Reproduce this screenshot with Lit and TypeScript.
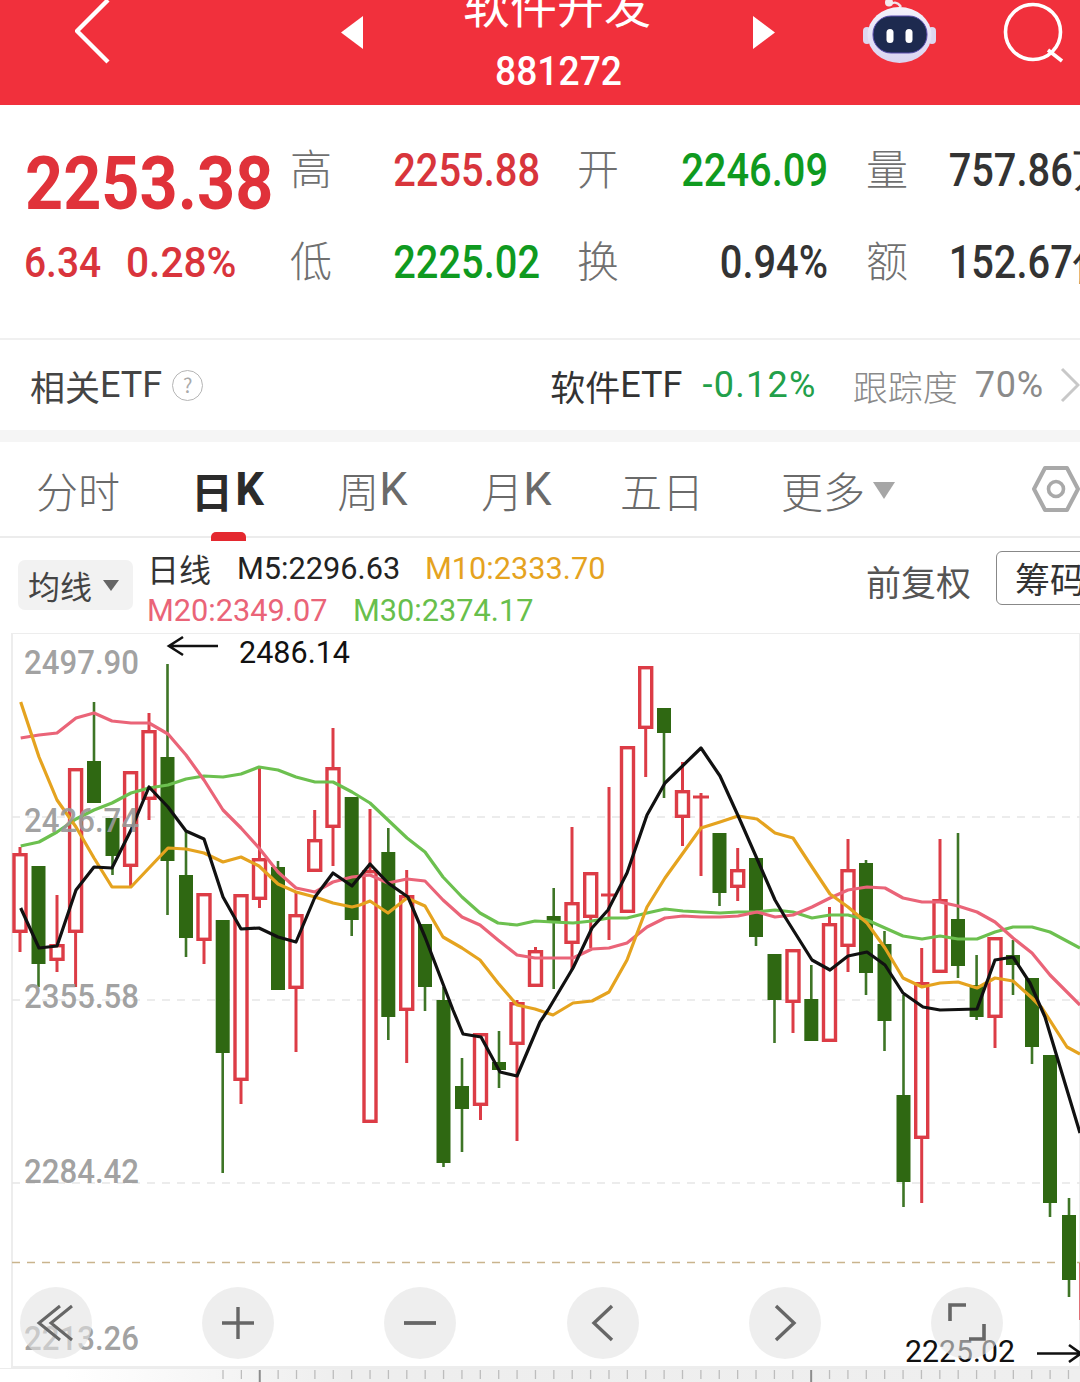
import { LitElement, html, css, svg } from "lit";
import { customElement } from "lit/decorators.js";

type Candle = [number, number, number, number, number, "r" | "g" | "d"];
const candles: Candle[] = [
  [20, 853, 933, 847, 952, "r"], [38.5, 866, 964, 866, 987, "g"], [57, 944, 961, 895, 972, "r"], [75.6, 768, 933, 768, 987, "r"],
  [94, 761, 803, 702, 803, "g"], [112.5, 818, 856, 818, 875, "g"], [130.6, 771, 867, 771, 887, "r"], [149, 730, 800, 713, 820, "r"],
  [167.5, 757, 861, 664, 915, "g"], [186, 875, 938, 830, 957, "g"], [204, 893, 941, 893, 964, "r"], [222.7, 920, 1053, 920, 1173, "g"],
  [241, 894, 1081, 894, 1104, "r"], [259.5, 858, 900, 767, 908, "r"], [278, 867, 990, 861, 990, "g"], [296, 914, 989, 892, 1052, "r"],
  [314.7, 839, 872, 810, 872, "r"], [333, 767, 828, 728, 866, "r"], [351.7, 797, 920, 797, 936, "g"], [370, 870, 1123, 809, 1123, "r"],
  [388.3, 852, 1017, 828, 1040, "g"], [406.7, 895, 1011, 870, 1063, "r"], [425, 924, 987, 924, 1011, "g"], [443.5, 1000, 1163, 987, 1167, "g"],
  [462, 1086, 1109, 1058, 1152, "g"], [480.5, 1033, 1106, 1033, 1120, "r"], [499, 1062, 1070, 1031, 1088, "g"], [517, 1002, 1045, 1000, 1141, "r"],
  [535.5, 950, 987, 947, 987, "r"], [553.7, 916, 923, 888, 989, "g"], [572, 902, 944, 827, 970, "r"], [590.7, 872, 918, 872, 948, "r"],
  [609, 895, 895, 787, 940, "d"], [627.5, 746, 913, 746, 913, "r"], [645.7, 666, 729, 666, 777, "r"], [664, 708, 733, 708, 798, "g"],
  [682.5, 790, 818, 762, 846, "r"], [701, 797, 797, 793, 876, "d"], [719.5, 833, 893, 833, 906, "g"], [737.7, 869, 888, 848, 901, "r"],
  [756, 858, 937, 858, 946, "g"], [774.5, 954, 1000, 954, 1043, "g"], [793, 949, 1003, 949, 1033, "r"], [811.3, 999, 1041, 965, 1041, "g"],
  [829.5, 923, 1042, 907, 1042, "r"], [848, 869, 947, 839, 972, "r"], [866, 863, 973, 860, 995, "g"], [884.5, 944, 1021, 931, 1051, "g"],
  [903.5, 1095, 1182, 995, 1207, "g"], [921.7, 982, 1139, 948, 1203, "r"], [940, 899, 973, 839, 973, "r"], [958, 919, 966, 833, 978, "g"],
  [976.6, 985, 1017, 955, 1020, "g"], [995, 937, 1018, 937, 1048, "r"], [1013, 955, 965, 940, 995, "g"], [1032, 978, 1047, 978, 1064, "g"],
  [1050, 1055, 1203, 1055, 1217, "g"], [1069, 1215, 1280, 1198, 1297, "g"], [1087, 1263, 1320, 1263, 1320, "r"],
];

const m5 = "20.7,908 39,948 57,946 76,890 94,867 112,868 131,830 149,787 168,807 186,831 204,839 223,897 241,929 259,928 278,937 296,942 315,897 333,873 352,886 370,864 388,883 408,897 425,937 453,1010 463,1034 481,1037 500,1072 517,1076 540,1022 548,1010 573,968 592,928 608,910 627,873 647,815 665,783 701,748 720,776 740,820 775,900 785,917 812,960 830,970 848,956 867,952 885,965 903,993 923,1007 940,1010 977,1009 995,960 1013,957 1030,983 1045,1017 1080,1133";
const m10 = "20.7,702 39,757 57,800 76,827 94,858 112,887 131,887 149,868 168,848 186,849 204,853 223,862 241,857 259,866 278,884 296,892 315,897 333,903 352,907 360,905 370,901 388,913 407,898 425,906 443,937 462,948 480,960 498,983 517,1005 535,1009 553,1015 573,1003 592,1001 609,992 627,960 647,907 665,878 683,853 701,828 720,822 738,816 757,819 775,833 793,838 812,867 830,894 848,907 867,923 885,948 903,978 922,987 940,983 958,982 977,988 995,978 1013,981 1032,998 1042,1008 1067,1047 1080,1054";
const m20 = "20.7,738 39,735 57,733 76,718 94,713 112,721 131,723 149,723 168,734 186,755 204,780 223,810 241,828 259,848 278,872 296,888 315,892 333,882 352,877 370,875 388,883 407,879 425,881 443,900 462,917 480,925 498,940 517,955 535,958 553,958 573,958 592,949 609,948 627,943 647,927 665,918 683,916 701,917 720,917 738,916 757,912 775,917 793,915 812,907 830,898 848,890 867,887 885,888 903,898 922,902 940,902 958,906 977,912 995,922 1013,938 1032,953 1050,975 1080,1005";
const m30 = "20.7,846 39,842 57,832 76,819 94,810 112,803 131,793 149,788 168,785 186,779 204,776 223,777 241,774 259,767 278,770 296,777 315,782 333,782 352,792 370,803 388,820 407,838 425,852 443,877 462,897 480,913 498,923 517,925 535,921 553,922 573,923 592,921 609,918 627,918 647,913 665,909 683,911 720,913 738,912 757,912 775,910 793,912 812,918 830,915 848,915 867,920 885,928 903,936 922,939 940,936 958,939 977,939 995,932 1013,927 1032,927 1050,932 1080,948";

const axis: [string, number][] = [["2497.90", 674], ["2426.74", 832], ["2355.58", 1008], ["2284.42", 1183], ["2213.26", 1350]];

@customElement("app-root")
export class AppRoot extends LitElement {
  static styles = css`
    :host { display: block; width: 1080px; height: 1382px; overflow: hidden; background: #fff; font-family: "Noto Sans CJK SC", sans-serif; color: #333; }
    .n { font-family: "Roboto", sans-serif; }
    .head { height: 105px; background: #f1303c; display: flex; align-items: flex-start; color: #fff; overflow: hidden; }
    .head svg { display: block; flex: none; }
    .title { width: 388px; box-sizing: border-box; padding-right: 2px; flex: none; text-align: center; margin-top: -24px; }
    .title .t1 { font-size: 47px; line-height: 54px; height: 54px; }
    .title .t2 { font-size: 40px; line-height: 48px; margin: 18px 0 0 3px; transform: scaleX(.93); font-weight: 500; }
    .quote { height: 233px; box-sizing: border-box; padding: 19px 0 0 25px; display: grid; grid-template-columns: 266px 60px 189px 38px 60px 190px 39px 60px 140px; grid-auto-rows: 92px; align-items: center; white-space: nowrap; }
    .big { font-size: 75px; line-height: 80px; color: #e0323a; font-weight: 700; margin-top: 26px; transform: scaleX(.887); transform-origin: left center; }
    .chg { font-size: 43px; line-height: 50px; color: #d9343c; display: flex; font-weight: 500; margin-left: -1px; }
    .chg span { width: 102px; flex: none; transform: scaleX(.905); transform-origin: left center; }
    .chg span + span { transform: scaleX(.945); }
    .lab { font-size: 42px; line-height: 46px; color: #707070; font-weight: 300; margin-top: -6px; margin-left: -1px; }
    .val { font-size: 46px; line-height: 50px; text-align: right; font-weight: 500; transform: scaleX(.865); transform-origin: right center; }
    .val.last { text-align: left; padding-left: 25px; color: #333; transform-origin: left center; }
    .red { color: #d8353c; } .grn { color: #0f9a1f; } .blk { color: #333; }
    .etf { height: 92px; border-top: 2px solid #f0f0f0; box-sizing: border-box; display: flex; align-items: center; padding-left: 30px; font-size: 35px; white-space: nowrap; color: #444; }
    .etf .en { font-size: 36px; }
    .qm { width: 31px; height: 31px; border: 1.5px solid #b5b5b5; border-radius: 50%; box-sizing: border-box; margin-left: 10px; color: #aaa; font-size: 20px; line-height: 28px; text-align: center; flex: none; }
    .etf-r { margin-left: auto; display: flex; align-items: center; }
    .etf-name { color: #333; font-weight: 400; }
    .etf-pct { color: #22a04a; font-size: 36px; margin-left: 20px; letter-spacing: 1.3px; }
    .etf-trk { color: #8a8a8a; margin-left: 36px; font-weight: 300; }
    .etf-num { color: #8a8a8a; font-size: 36px; margin-left: 17px; letter-spacing: .8px; }
    .etf-r svg { margin-left: 16px; display: block; }
    .band { height: 12px; background: #f5f5f5; }
    .tabs { height: 96px; box-sizing: border-box; border-bottom: 2px solid #ececec; display: flex; align-items: center; position: relative; font-size: 42px; color: #6a6a6a; font-weight: 300; white-space: nowrap; padding-left: 36px; }
    .tab { display: flex; align-items: center; flex: none; position: relative; }
    .tab .en { font-size: 46px; font-family: "Roboto", sans-serif; font-weight: 400; transform: scaleX(.98); }
    .on { color: #2b2b2b; font-weight: 700; }
    .on .en { font-weight: 700; margin-left: 2px; }
    .ul { position: absolute; left: 20px; bottom: -21px; width: 35px; height: 9px; background: #e4282f; border-radius: 5px 5px 0 0; }
    .hex { margin-left: auto; display: block; flex: none; }
    .tri { width: 0; height: 0; border-left: 11px solid transparent; border-right: 11px solid transparent; border-top: 17px solid #a6a6a6; margin-left: 8px; margin-top: 2px; }
    .gap-d { margin-left: 71px; } .gap-w { margin-left: 73px; } .gap-m { margin-left: 73px; } .gap-5 { margin-left: 68px; } .gap-x { margin-left: 77px; }
    .sub { height: 95px; display: flex; white-space: nowrap; position: relative; overflow: hidden; }
    .ma-btn { margin: 22px 0 0 18px; width: 115px; height: 50px; border-radius: 7px; background: #f2f2f2; display: flex; align-items: center; box-sizing: border-box; padding-left: 10px; font-size: 32px; color: #444; flex: none; }
    .ma-btn i { width: 0; height: 0; border-left: 8px solid transparent; border-right: 8px solid transparent; border-top: 11px solid #666; margin-left: 11px; }
    .mas { margin-left: 14px; font-size: 32px; display: flex; flex-direction: column; padding-top: 9px; line-height: 42px; }
    .mas .row { display: flex; height: 42px; }
    .mas .cjk { font-size: 32px; color: #333; width: 90px; font-weight: 400; }
    .mas .n { transform: scaleX(.96); transform-origin: left center; }
    .m5 { color: #222; width: 188px; } .m10 { color: #e5a31f; }
    .m20 { color: #ea6478; width: 206px; } .m30 { color: #68bf4c; }
    .fq { margin-left: auto; font-size: 35px; color: #555; font-weight: 400; padding-top: 21px; line-height: 44px; }
    .chip { margin: 13px -30px 0 25px; width: 114px; height: 54px; border: 1px solid #888; border-radius: 6px 0 0 6px; box-sizing: border-box; padding-left: 18px; font-size: 35px; line-height: 52px; color: #333; flex: none; }
    .chart { height: 735px; position: relative; overflow: hidden; }
    .chart > svg { display: block; position: absolute; left: 0; top: 0; }
    .ctrls { position: absolute; left: 20px; right: 0; top: 654px; display: flex; gap: 110.2px; }
    .ctrl { width: 72px; height: 72px; border-radius: 50%; background: rgba(226,226,226,.6); flex: none; display: flex; align-items: center; justify-content: center; }
    .ruler { height: 14px; display: block; background: linear-gradient(90deg, #fff 6%, #eee 32%, #efefef 100%); border-top: 1px solid #ececec; }
    text { font-family: "Roboto", sans-serif; }
  `;

  private renderChart() {
    const red = "#dc3c46";
    return svg`
      <rect x="12" y="633" width="1068" height="734" fill="none" stroke="#ededed" stroke-width="2"/>
      ${[817, 1000, 1183].map((y) => svg`<line x1="12" x2="1080" y1=${y} y2=${y} stroke="#e6e6e6" stroke-width="1.5" stroke-dasharray="8 7"/>`)}
      <line x1="12" x2="1080" y1="1262.5" y2="1262.5" stroke="#c9b48d" stroke-width="1.5" stroke-dasharray="8 7"/>
      ${candles.map(([x, t, b, h, l, k]) => {
        if (k === "g") {
          return svg`<line x1=${x} x2=${x} y1=${h} y2=${l} stroke="#3e7526" stroke-width="2.6"/><rect x=${x - 7} y=${t} width="14" height=${b - t} fill="#2f6812"/>`;
        }
        if (k === "d") {
          return svg`<line x1=${x} x2=${x} y1=${h} y2=${l} stroke=${red} stroke-width="3"/><line x1=${x - 8} x2=${x + 8} y1=${t} y2=${t} stroke=${red} stroke-width="3"/>`;
        }
        return svg`<line x1=${x} x2=${x} y1=${h} y2=${l} stroke=${red} stroke-width="3"/><rect x=${x - 6} y=${t + 1.7} width="12" height=${b - t - 3.4} fill="#fff" stroke=${red} stroke-width="3.4"/>`;
      })}
      <polyline points=${m30} fill="none" stroke="#6cc04f" stroke-width="3.2" stroke-linejoin="round"/>
      <polyline points=${m20} fill="none" stroke="#ea6478" stroke-width="3.2" stroke-linejoin="round"/>
      <polyline points=${m10} fill="none" stroke="#e5a31f" stroke-width="3.2" stroke-linejoin="round"/>
      <polyline points=${m5} fill="none" stroke="#111" stroke-width="3.2" stroke-linejoin="round"/>
      ${axis.map(([t, y]) => svg`<text x="24" y=${y} font-size="34" textLength="115" lengthAdjust="spacingAndGlyphs" font-weight="500" fill="#999" fill-opacity=".92">${t}</text>`)}
      <path d="M218 646H170M183 637L169 646L183 655" fill="none" stroke="#111" stroke-width="2.6"/>
      <text x="239" y="663" font-size="31" textLength="111" lengthAdjust="spacingAndGlyphs" fill="#111">2486.14</text>
      <text x="905" y="1362" font-size="31" textLength="110" lengthAdjust="spacingAndGlyphs" fill="#111">2225.02</text>
      <path d="M1037 1353.5H1080M1069 1345L1081 1353.5L1069 1362" fill="none" stroke="#111" stroke-width="2.6"/>
    `;
  }

  private ticks() {
    const out = [];
    for (let i = 0; i < 48; i++) {
      const x = 223 + i * 18.38;
      const major = (i - 2) % 30 === 0;
      out.push(svg`<line x1=${x} x2=${x} y1="1" y2=${major ? 14 : 10} stroke=${major ? "#8c8c8c" : "#bdbdbd"} stroke-width=${major ? 2 : 1.3}/>`);
    }
    return out;
  }

  render() {
    return html`
      <div class="head">
        <svg width="38" height="105" viewBox="0 0 38 105" style="margin-left:75px"><path d="M33 0L2 31L33 62" fill="none" stroke="#fff" stroke-width="4.4"/></svg>
        <svg width="24" height="105" viewBox="0 0 24 105" style="margin-left:227px"><path d="M23 16V49L1 32.5Z" fill="#fff"/></svg>
        <div class="title">
          <div class="t1">软件开发</div>
          <div class="t2 n">881272</div>
        </div>
        <svg width="24" height="105" viewBox="0 0 24 105"><path d="M1 16V49L23 32.5Z" fill="#fff"/></svg>
        <svg width="78" height="70" viewBox="0 0 78 70" style="margin-left:84px">
          <defs><linearGradient id="hd" x1="0" y1="0" x2="0" y2="1"><stop offset="0" stop-color="#f4f2fb"/><stop offset="1" stop-color="#d9d4f1"/></linearGradient></defs>
          <path d="M29 5c4-3 8-4 12 2" fill="none" stroke="#f0e4ea" stroke-width="2.4"/>
          <circle cx="29" cy="2.5" r="4" fill="#f4eaee"/>
          <rect x="3" y="27" width="8" height="17" rx="4" fill="#ddd7f0"/><rect x="68" y="27" width="8" height="17" rx="4" fill="#ddd7f0"/>
          <ellipse cx="39.5" cy="35" rx="32" ry="28" fill="url(#hd)"/>
          <rect x="13" y="16" width="54" height="37" rx="18" fill="#1d2a4f" stroke="#5c4fb0" stroke-width="1"/>
          <rect x="26.5" y="29" width="7" height="14" rx="3.5" fill="#fff"/><rect x="45.5" y="29" width="7" height="14" rx="3.5" fill="#fff"/>
        </svg>
        <svg width="66" height="70" viewBox="0 0 66 70" style="margin-left:64px">
          <circle cx="31" cy="32" r="27.5" fill="none" stroke="#fff" stroke-width="3.6"/>
          <path d="M46 50L60 61" fill="none" stroke="#fff" stroke-width="3.6"/>
        </svg>
      </div>

      <div class="quote">
        <div class="big n">2253.38</div>
        <div class="lab">高</div>
        <div class="val n red">2255.88</div><div></div>
        <div class="lab">开</div>
        <div class="val n grn">2246.09</div><div></div>
        <div class="lab">量</div>
        <div class="val n last">757.86万</div>

        <div class="chg n"><span>6.34</span><span>0.28%</span></div>
        <div class="lab">低</div>
        <div class="val n grn">2225.02</div><div></div>
        <div class="lab">换</div>
        <div class="val n blk">0.94%</div><div></div>
        <div class="lab">额</div>
        <div class="val n last">152.67亿</div>
      </div>

      <div class="etf">
        <span>相关</span><span class="n en">ETF</span><span class="qm">?</span>
        <div class="etf-r">
          <span class="etf-name">软件</span><span class="n en etf-name">ETF</span>
          <span class="n etf-pct">-0.12%</span>
          <span class="etf-trk">跟踪度</span>
          <span class="n etf-num">70%</span>
          <svg width="20" height="36" viewBox="0 0 20 36"><path d="M2 2L18 18L2 34" fill="none" stroke="#c8c8c8" stroke-width="3"/></svg>
        </div>
      </div>
      <div class="band"></div>

      <div class="tabs">
        <div class="tab">分时</div>
        <div class="tab on gap-d">日<span class="en">K</span><div class="ul"></div></div>
        <div class="tab gap-w">周<span class="en">K</span></div>
        <div class="tab gap-m">月<span class="en">K</span></div>
        <div class="tab gap-5">五日</div>
        <div class="tab gap-x">更多<span class="tri"></span></div>
        <svg class="hex" width="48" height="48" viewBox="0 0 48 48">
          <path d="M13 3H35L46 24L35 45H13L2 24Z" fill="none" stroke="#a9a9a9" stroke-width="4" stroke-linejoin="round"/>
          <circle cx="24" cy="24" r="7.5" fill="none" stroke="#a9a9a9" stroke-width="3.6"/>
        </svg>
      </div>

      <div class="sub">
        <div class="ma-btn">均线<i></i></div>
        <div class="mas">
          <div class="row"><span class="cjk">日线</span><span class="n m5">M5:2296.63</span><span class="n m10">M10:2333.70</span></div>
          <div class="row"><span class="n m20">M20:2349.07</span><span class="n m30">M30:2374.17</span></div>
        </div>
        <div class="fq">前复权</div>
        <div class="chip">筹码</div>
      </div>

      <div class="chart">
        <svg width="1080" height="735" viewBox="0 633 1080 735">${this.renderChart()}</svg>
        <div class="ctrls">
          <div class="ctrl"><svg width="40" height="40" viewBox="0 0 40 40"><path d="M24 3L3 20L24 37M36 3L15 20L36 37" fill="none" stroke="#666" stroke-width="3"/></svg></div>
          <div class="ctrl"><svg width="36" height="36" viewBox="0 0 36 36"><path d="M18 2V34M2 18H34" fill="none" stroke="#666" stroke-width="3.4"/></svg></div>
          <div class="ctrl"><svg width="36" height="36" viewBox="0 0 36 36"><path d="M2 18H34" fill="none" stroke="#666" stroke-width="3.8"/></svg></div>
          <div class="ctrl"><svg width="24" height="38" viewBox="0 0 24 38"><path d="M21 2L3 19L21 36" fill="none" stroke="#666" stroke-width="3.4"/></svg></div>
          <div class="ctrl"><svg width="24" height="38" viewBox="0 0 24 38"><path d="M3 2L21 19L3 36" fill="none" stroke="#666" stroke-width="3.4"/></svg></div>
          <div class="ctrl"><svg width="40" height="40" viewBox="0 0 40 40"><path d="M3 18V2H19M37 21V36H22" fill="none" stroke="#666" stroke-width="3.6"/></svg></div>
        </div>
      </div>
      <svg class="ruler" width="1080" height="14" viewBox="0 0 1080 14">${this.ticks()}</svg>
    `;
  }
}
